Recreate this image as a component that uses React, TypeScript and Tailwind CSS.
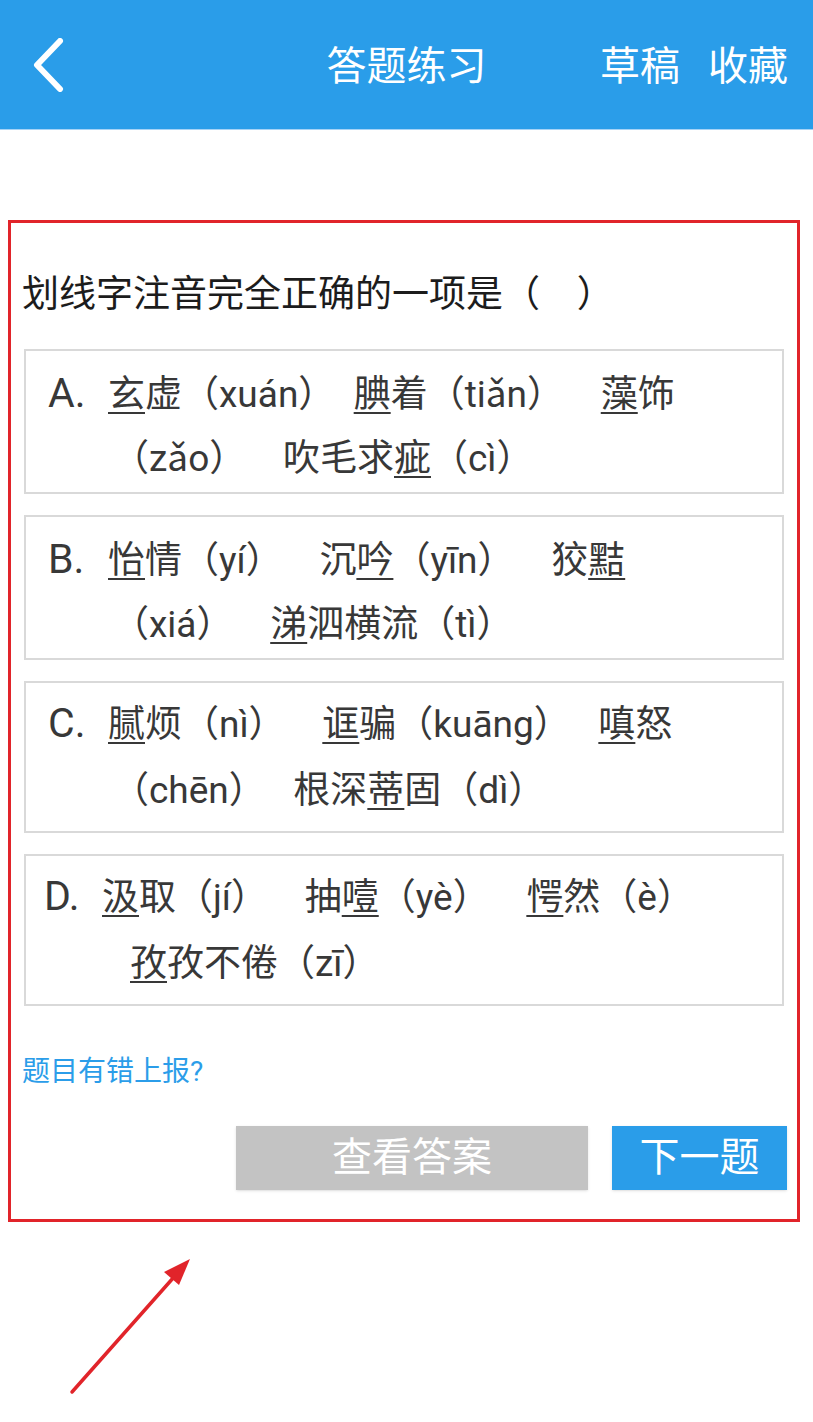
import React from 'react';

// One piece of an option line: text, and whether it is underlined
type Seg = [string, boolean?];

interface OptionLine {
  indent: string;
  segs: Seg[];
}

interface Option {
  label: string;
  labelCls: string;
  boxCls: string;
  first: Seg[];
  second: OptionLine;
}

const options: Option[] = [
  {
    label: 'A.',
    labelCls: 'pl-[22px] w-[82px]',
    boxCls: 'pt-[12px] pb-[1px] leading-[64px]',
    first: [['玄', true], ['虚（xuán）  '], ['腆', true], ['着（tiǎn）    '], ['藻', true], ['饰']],
    second: { indent: 'pl-[86px]', segs: [['（zǎo）    吹毛求'], ['疵', true], ['（cì）']] },
  },
  {
    label: 'B.',
    labelCls: 'pl-[22px] w-[82px]',
    boxCls: 'pt-[12px] pb-[1px] leading-[64px]',
    first: [['怡', true], ['情（yí）    沉'], ['吟', true], ['（yīn）    狡'], ['黠', true]],
    second: { indent: 'pl-[86px]', segs: [['（xiá）    '], ['涕', true], ['泗横流（tì）']] },
  },
  {
    label: 'C.',
    labelCls: 'pl-[22px] w-[82px]',
    boxCls: 'pt-[9px] pb-[7px] leading-[66px]',
    first: [['腻', true], ['烦（nì）    '], ['诓', true], ['骗（kuāng）   '], ['嗔', true], ['怒']],
    second: { indent: 'pl-[86px]', segs: [['（chēn）   根深'], ['蒂', true], ['固（dì）']] },
  },
  {
    label: 'D.',
    labelCls: 'pl-[18px] w-[76px]',
    boxCls: 'pt-[9px] pb-[7px] leading-[66px]',
    first: [['汲', true], ['取（jí）    抽'], ['噎', true], ['（yè）    '], ['愕', true], ['然（è）']],
    second: { indent: 'pl-[104px]', segs: [['孜', true], ['孜不倦（zī）']] },
  },
];

const renderSegs = (segs: Seg[]) =>
  segs.map(([text, underline], i) => (
    <span
      key={i}
      className={underline ? 'underline decoration-[1.5px] underline-offset-[5px]' : ''}
    >
      {text}
    </span>
  ));

const OptionBox: React.FC<{ option: Option }> = ({ option }) => (
  <div className={`border-2 border-[#d9d9d9] text-[37px] text-[#383838] whitespace-pre ${option.boxCls}`}>
    <div className="flex items-baseline">
      <span className={`shrink-0 text-[41px] leading-[40px] ${option.labelCls}`}>{option.label}</span>
      <span>{renderSegs(option.first)}</span>
    </div>
    <div className={option.second.indent}>{renderSegs(option.second.segs)}</div>
  </div>
);

export default function App() {
  return (
    <div className="w-[813px] h-[1422px] overflow-hidden bg-white font-[Roboto,'Noto_Sans_CJK_SC',sans-serif]">
      {/* Header */}
      <header className="grid grid-cols-[1fr_auto_1fr] items-center h-[130px] bg-[#2a9de9] border-b border-[#a6d3f6] text-white text-[40px] font-['Noto_Sans_CJK_SC',sans-serif]">
        <div className="pl-[32px] flex items-center">
          <svg width="34" height="54" viewBox="0 0 34 54" fill="none">
            <path d="M28 3 L5 27 L28 51" stroke="white" strokeWidth="6" strokeLinecap="round" strokeLinejoin="round" />
          </svg>
        </div>
        <h1 className="leading-none -mt-[4px]">答题练习</h1>
        <div className="flex justify-end gap-[28px] pr-[25px] leading-none -mt-[4px]">
          <span>草稿</span>
          <span>收藏</span>
        </div>
      </header>

      {/* Question card */}
      <div className="mt-[90px] ml-[8px] w-[792px] border-[3px] border-[#e1242a]">
        <p className="pl-[11px] pt-[46px] text-[37px] leading-[52px] text-[#1c1c1c] whitespace-pre">
          划线字注音完全正确的一项是（    ）
        </p>

        <div className="mt-[28px] mx-[13px] flex flex-col gap-[21px]">
          {options.map(o => (
            <OptionBox key={o.label} option={o} />
          ))}
        </div>

        <p className="mt-[46px] pl-[11px] text-[28px] leading-[40px] text-[#2b9de9]">题目有错上报?</p>

        <div className="mt-[34px] pb-[29px] pr-[10px] flex justify-end gap-[24px]">
          <button className="w-[352px] h-[64px] bg-[#c3c3c3] text-white text-[40px] leading-none shadow-sm">
            查看答案
          </button>
          <button className="w-[175px] h-[64px] bg-[#2a9de9] text-white text-[40px] leading-none shadow-sm">
            下一题
          </button>
        </div>
      </div>

      {/* Annotation arrow */}
      <svg className="block" width="813" height="200" viewBox="0 0 813 200">
        <line x1="72" y1="170" x2="174" y2="55" stroke="#e1242a" strokeWidth="3.5" strokeLinecap="round" />
        <polygon points="190,37 179,63 164,50" fill="#e1242a" />
      </svg>
    </div>
  );
}
